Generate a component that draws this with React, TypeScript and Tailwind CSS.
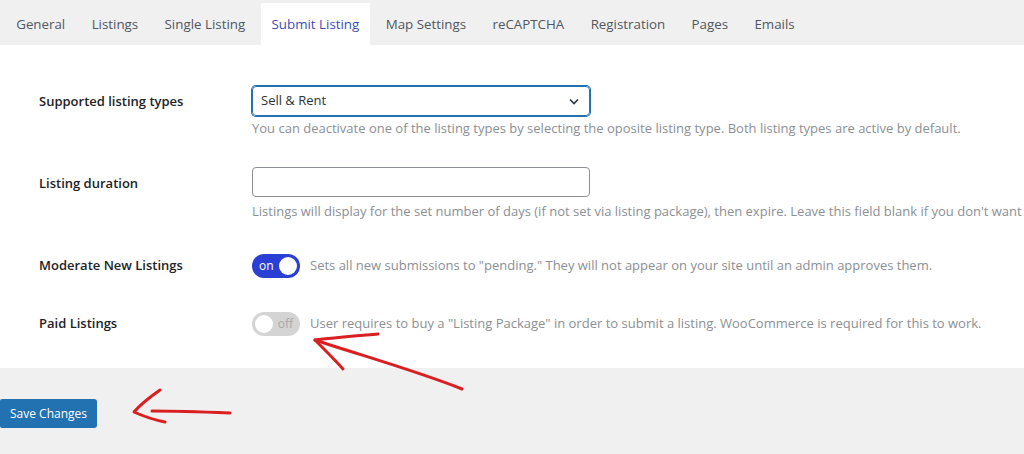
import React from "react";

const tabs = ["General", "Listings", "Single Listing", "Submit Listing", "Map Settings", "reCAPTCHA", "Registration", "Pages", "Emails"];

function Row({ label, children, className = "", labelClass = "" }: { label: string; children: React.ReactNode; className?: string; labelClass?: string }) {
  return (
    <div className={"flex " + className}>
      <div className={"w-[252px] shrink-0 whitespace-nowrap pl-[39px] text-[13px] font-semibold text-[#1d2327] " + labelClass}>{label}</div>
      <div className="min-w-0 flex-1">{children}</div>
    </div>
  );
}

export default function App() {
  return (
    <div
      className="relative h-[454px] w-[1024px] overflow-hidden bg-[#f0f0f1]"
      style={{ fontFamily: '"Open Sans", "Noto Sans", sans-serif' }}
    >
      <div className="flex h-[45px] items-end pl-[3px]">
        {tabs.map((t) => {
          const active = t === "Submit Listing";
          return (
            <div
              key={t}
              className={
                "mx-[2.7px] flex h-[42px] items-center px-[10.5px] pt-[2px] text-[13.33px] whitespace-nowrap " +
                (active ? "bg-white text-[#3e4db3]" : "text-[#50575e]")
              }
            >
              {t}
            </div>
          );
        })}
      </div>
      <div className="h-[323px] bg-white pt-[41px]">
        <Row label="Supported listing types" className="items-start" labelClass="pt-[6px]">
          <div>
            <div className="relative flex h-[30px] w-[338px] items-center rounded-[4px] border border-[#2271b1] pl-[8px] text-[13px] text-[#2c3338] shadow-[0_0_0_1px_#2271b1]">
              Sell &amp; Rent
              <svg className="absolute right-[10px] top-[11px]" width="10" height="7" viewBox="0 0 10 7">
                <path d="M1 1.5 L5 5.5 L9 1.5" fill="none" stroke="#2c3338" strokeWidth="1.6" />
              </svg>
            </div>
            <div className="mt-[3px] whitespace-nowrap text-[13px] text-[#8c8f94]">
              You can deactivate one of the listing types by selecting the oposite listing type. Both listing types are active by default.
            </div>
          </div>
        </Row>
        <Row label="Listing duration" className="mt-[28px] items-start" labelClass="pt-[7px]">
          <div>
            <div className="h-[30px] w-[338px] rounded-[4px] border border-[#8c8f94]" />
            <div className="mt-[5px] whitespace-nowrap text-[13px] text-[#8c8f94]">
              Listings will display for the set number of days (if not set via listing package), then expire. Leave this field blank if you don't want listings to expire.
            </div>
          </div>
        </Row>
        <Row label="Moderate New Listings" className="mt-[33px] items-center">
          <div className="flex items-center">
            <div className="relative flex h-[24px] w-[48px] items-center rounded-full bg-[#2a3fd4] pl-[7px] text-[12px] text-white">
              on
              <span className="absolute right-[3px] top-[3px] h-[18px] w-[18px] rounded-full bg-white" />
            </div>
            <span className="ml-[10px] whitespace-nowrap text-[13px] text-[#8c8f94]">
              Sets all new submissions to "pending." They will not appear on your site until an admin approves them.
            </span>
          </div>
        </Row>
        <Row label="Paid Listings" className="mt-[34px] items-center">
          <div className="flex items-center">
            <div className="relative flex h-[24px] w-[48px] items-center justify-end rounded-full bg-[#d4d4d4] pr-[7px] text-[12px] text-[#a7a7a7]">
              off
              <span className="absolute left-[3px] top-[3px] h-[18px] w-[18px] rounded-full bg-white" />
            </div>
            <span className="ml-[10px] whitespace-nowrap text-[13px] text-[#8c8f94]">
              User requires to buy a "Listing Package" in order to submit a listing. WooCommerce is required for this to work.
            </span>
          </div>
        </Row>
      </div>
      <div className="pt-[31px]">
        <button className="h-[29px] w-[97px] rounded-r-[3px] rounded-l-[2px] bg-[#2271b1] text-[12px] text-white">
          Save Changes
        </button>
      </div>
      <svg className="pointer-events-none absolute left-0 top-0" width="1024" height="454" viewBox="0 0 1024 454">
        <g fill="none" stroke="#d91f1f" strokeWidth="3" strokeLinecap="round" strokeLinejoin="round">
          <path d="M462 389 C 420 372, 360 355, 315 340" />
          <path d="M378 334 C 355 336, 330 338, 315 340 C 325 350, 335 360, 343 369" />
          <path d="M152 411 C 180 411, 205 412, 230 413" />
          <path d="M160 390 C 150 397, 140 405, 134 412 C 145 417, 155 420, 165 422" />
        </g>
      </svg>
    </div>
  );
}
